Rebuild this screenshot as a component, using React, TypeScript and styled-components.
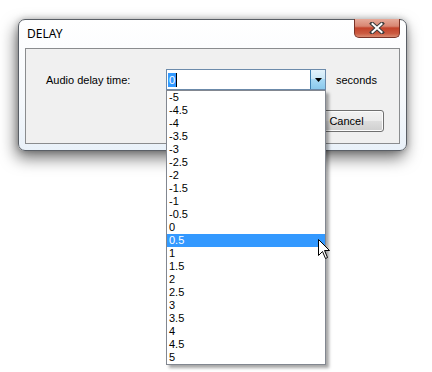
import React from "react";
import styled, { createGlobalStyle } from "styled-components";

const Global = createGlobalStyle`
  html, body { margin: 0; padding: 0; background: #ffffff; }
  body { font-family: "Liberation Sans", "DejaVu Sans", sans-serif; }
`;

const FONT = `"Liberation Sans", "DejaVu Sans", sans-serif`;
const TITLE_FONT = `"Segoe UI", "Noto Sans", "DejaVu Sans", sans-serif`;

const Page = styled.div`
  width: 432px;
  height: 372px;
  padding: 19px 0 0 18px;
  box-sizing: border-box;
  position: relative;
  overflow: hidden;
`;

const Window = styled.div`
  width: 389px;
  height: 132px;
  box-sizing: border-box;
  border: 1px solid #5a5f66;
  border-radius: 7px;
  background: linear-gradient(#ffffff, #f6f9fc 60%, #e9f1f9);
  box-shadow: -2px 7px 16px rgba(0, 0, 0, 0.55), 0 0 6px rgba(0, 0, 0, 0.25);
  display: flex;
  flex-direction: column;
  padding: 0 6px 6px 6px;
  position: relative;
`;

const TitleBar = styled.div`
  height: 28px;
  display: flex;
  align-items: flex-start;
  justify-content: space-between;
`;

const Title = styled.div`
  font-family: ${TITLE_FONT};
  font-size: 12px;
  color: #000;
  padding: 7px 0 0 2px;
  line-height: 14px;
`;

const CloseButton = styled.div`
  width: 46px;
  height: 19px;
  margin-right: 0px;
  margin-top: -1px;
  box-sizing: border-box;
  border: 1px solid #7a3327;
  border-top: none;
  border-radius: 0 0 5px 5px;
  background: linear-gradient(#e6aa9a 0%, #d88672 40%, #c3432b 50%, #cb5a40 80%, #d98a70 100%);
  display: flex;
  align-items: center;
  justify-content: center;
`;

const Panel = styled.div`
  flex: 1;
  box-sizing: border-box;
  border: 1px solid #8a8c8e;
  background: #f0f0f0;
  display: flex;
  flex-direction: column;
  padding: 20px 15px 0 20px;
`;

const Row = styled.div`
  display: flex;
  align-items: center;
  height: 21px;
`;

const Label = styled.div`
  font-family: ${FONT};
  font-size: 11px;
  color: #000;
  width: 120px;
`;

const Combo = styled.div`
  position: relative;
  width: 160px;
  height: 21px;
  box-sizing: border-box;
  border: 1px solid #6c8bab;
  background: #fff;
  display: flex;
  align-items: stretch;
`;

const ComboText = styled.div`
  flex: 1;
  display: flex;
  align-items: center;
  padding-left: 1px;
`;

const SelectedText = styled.span`
  font-family: ${FONT};
  font-size: 11px;
  line-height: 14px;
  color: #fff;
  background: #3399ff;
  padding: 0 1px;
`;

const Caret = styled.span`
  width: 1px;
  height: 14px;
  background: #000;
`;

const DropButton = styled.div`
  width: 15px;
  box-sizing: border-box;
  border-left: 1px solid #3c7fb1;
  background: linear-gradient(#e3f3fc 0%, #cbe8f7 45%, #a7d9f5 50%, #8ac9ed 100%);
  display: flex;
  align-items: center;
  justify-content: center;
`;

const Seconds = styled.div`
  font-family: ${FONT};
  font-size: 11px;
  color: #000;
  margin-left: 10px;
`;

const ButtonRow = styled.div`
  display: flex;
  justify-content: flex-end;
  margin-top: 20px;
`;

const Button = styled.div`
  width: 75px;
  height: 22px;
  box-sizing: border-box;
  border: 1px solid #707070;
  border-radius: 3px;
  background: linear-gradient(#f2f2f2 0%, #ebebeb 48%, #dddddd 52%, #cfcfcf 100%);
  box-shadow: inset 0 0 0 1px #fcfcfc;
  font-family: ${FONT};
  font-size: 11px;
  color: #000;
  display: flex;
  align-items: center;
  justify-content: center;
`;

const List = styled.div`
  position: absolute;
  left: -1px;
  top: 20px;
  width: 160px;
  box-sizing: border-box;
  border: 1px solid #828790;
  background: #fff;
  box-shadow: 3px 3px 3px rgba(0, 0, 0, 0.35);
  z-index: 5;
`;

const Item = styled.div<{ $selected?: boolean }>`
  height: 13px;
  line-height: 13px;
  font-family: ${FONT};
  font-size: 11px;
  padding-left: 2px;
  color: ${(p) => (p.$selected ? "#fff" : "#000")};
  background: ${(p) => (p.$selected ? "#3399ff" : "transparent")};
`;

const Cursor = styled.svg`
  position: absolute;
  left: 318px;
  top: 239px;
  z-index: 10;
`;

const values = [
  "-5", "-4.5", "-4", "-3.5", "-3", "-2.5", "-2", "-1.5", "-1", "-0.5",
  "0", "0.5", "1", "1.5", "2", "2.5", "3", "3.5", "4", "4.5", "5",
];

export default function App() {
  return (
    <Page>
      <Global />
      <Window>
        <TitleBar>
          <Title>DELAY</Title>
          <CloseButton>
            <svg width="16" height="12" viewBox="0 0 16 12">
              <path d="M3 1.5 L13 10.5 M13 1.5 L3 10.5" stroke="#3b3b3b" strokeWidth="4" strokeLinecap="square" />
              <path d="M3.5 2 L12.5 10 M12.5 2 L3.5 10" stroke="#ffffff" strokeWidth="2" strokeLinecap="square" />
            </svg>
          </CloseButton>
        </TitleBar>
        <Panel>
          <Row>
            <Label>Audio delay time:</Label>
            <Combo>
              <ComboText>
                <SelectedText>0</SelectedText>
                <Caret />
              </ComboText>
              <DropButton>
                <svg width="7" height="4" viewBox="0 0 7 4">
                  <path d="M0 0 H7 L3.5 4 Z" fill="#000" />
                </svg>
              </DropButton>
              <List>
                {values.map((v) => (
                  <Item key={v} $selected={v === "0.5"}>
                    {v}
                  </Item>
                ))}
              </List>
            </Combo>
            <Seconds>seconds</Seconds>
          </Row>
          <ButtonRow>
            <Button>Cancel</Button>
          </ButtonRow>
        </Panel>
      </Window>
      <Cursor width="13" height="21" viewBox="0 0 13 21">
        <path
          d="M0.5 0.5 L0.5 16.5 L4.5 12.5 L7.5 19.5 L9.5 18.5 L6.5 11.5 L11.5 11.5 Z"
          fill="#ffffff"
          stroke="#000000"
          strokeWidth="1"
        />
      </Cursor>
    </Page>
  );
}
